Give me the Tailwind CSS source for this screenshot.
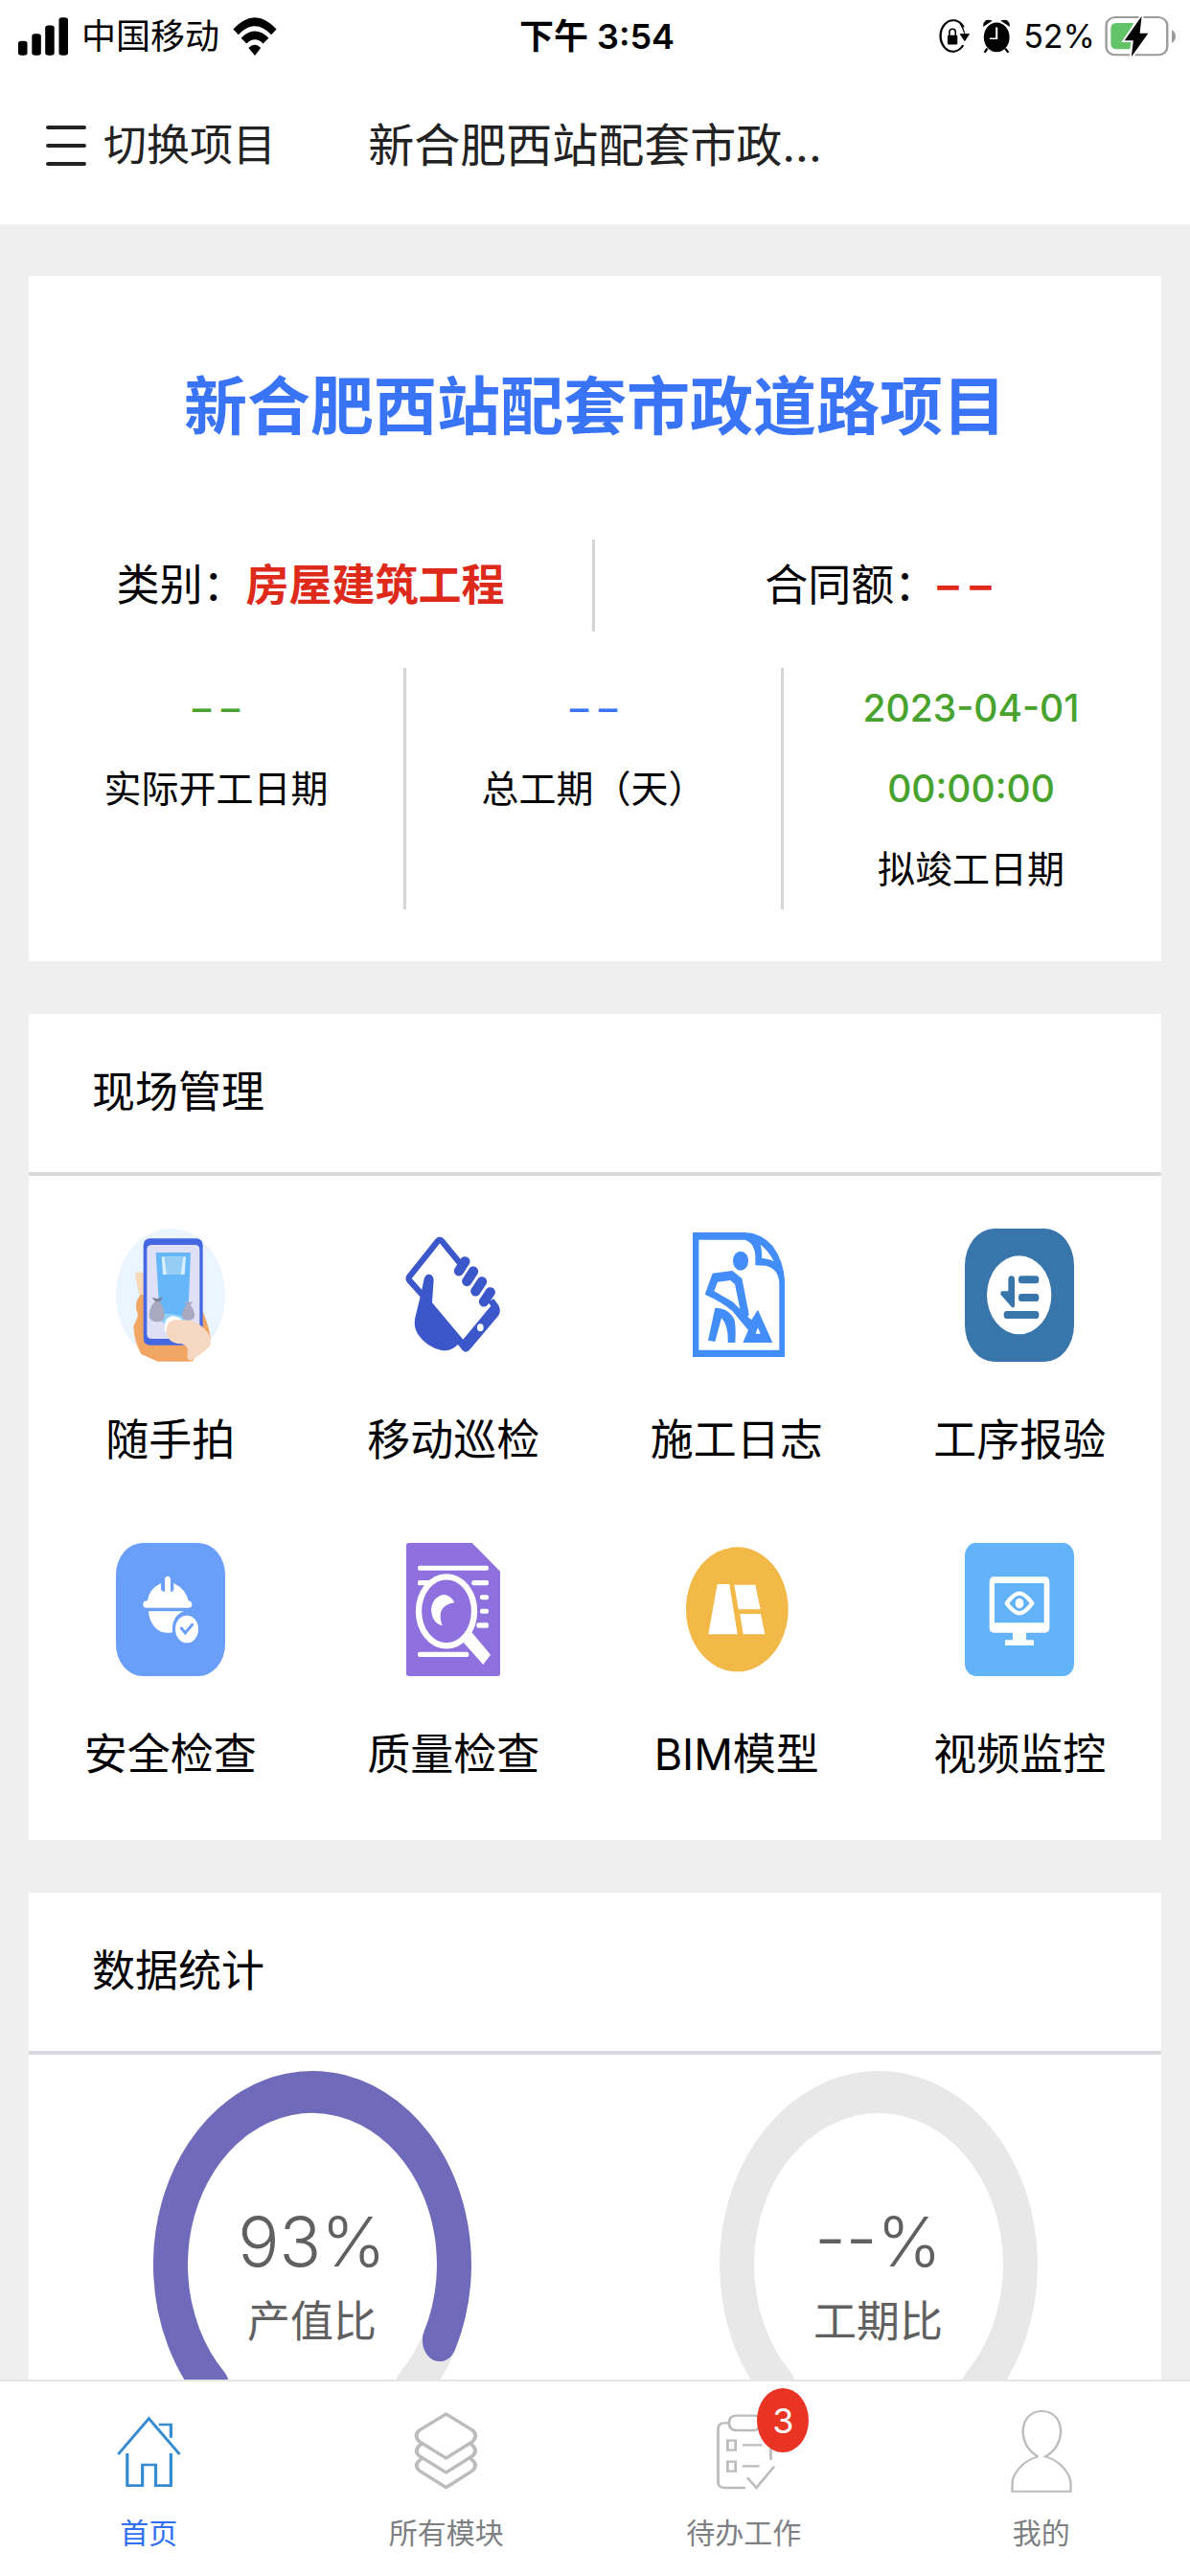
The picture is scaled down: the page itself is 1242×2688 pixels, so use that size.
<!DOCTYPE html>
<html lang="zh-CN">
<head>
<meta charset="utf-8">
<meta name="viewport" content="width=device-width, initial-scale=1">
<title>新合肥西站配套市政道路项目</title>
<script src="https://cdn.jsdelivr.net/npm/@tailwindcss/browser@4"></script>
</head>
<body class="flex h-screen flex-col bg-[#efefef] font-['Inter','Noto_Sans_CJK_SC',sans-serif] text-[45px] leading-[60px] text-black">

<header class="shrink-0 bg-white">
  <!-- Status bar -->
  <div class="grid h-[70px] grid-cols-[1fr_auto_1fr] items-center pt-[6px] pr-[15px] pl-[19px] text-[36px] leading-[48px]">
    <div class="flex items-center gap-[14px]">
      <svg class="h-[40px] w-[52px]" viewBox="49 50 131 119" preserveAspectRatio="none" aria-hidden="true">
        <rect x="49" y="124" width="24" height="44" rx="8"/><rect x="85" y="101" width="24" height="67" rx="8"/><rect x="120" y="75" width="24" height="93" rx="8"/><rect x="156" y="51" width="24" height="117" rx="8"/>
      </svg>
      <span>中国移动</span>
      <svg class="h-[40px] w-[46px]" viewBox="613 46 118 121" preserveAspectRatio="none" aria-hidden="true">
        <path d="M614 84Q672 10 730 84L716 101Q672 47 628 101ZM635 112Q672 68 709 112L694 129Q672 104 650 129ZM655 143Q672 123 688 143L672 167Z"/>
      </svg>
    </div>
    <div class="font-semibold">下午 3:54</div>
    <div class="flex items-center justify-end gap-[14px]">
      <svg class="h-[38px] w-[33px]" viewBox="904 60 83 112" preserveAspectRatio="none" aria-hidden="true">
        <path d="M971 88A33 48 0 1 0 970 143" fill="none" stroke="#000" stroke-width="6"/>
        <path d="M962 78Q973 92 974 110M962 109H986L974 130Z" fill="#000" stroke="#000" stroke-width="2"/>
        <rect x="929" y="112" width="26" height="29" rx="3"/><path d="M934 114V103Q934 93 942 93T950 103V114" fill="none" stroke="#000" stroke-width="4"/>
      </svg>
      <svg class="h-[36px] w-[28px]" viewBox="1027 57 69 110" preserveAspectRatio="none" aria-hidden="true">
        <ellipse cx="1062" cy="115" rx="33" ry="47"/><path d="M1029 78Q1030 56 1048 62ZM1094 78Q1093 56 1075 62Z" stroke="#000" stroke-width="3"/><path d="M1038 150L1031 163M1084 150L1092 163" stroke="#000" stroke-width="6"/><path d="M1062 83V119H1044" fill="none" stroke="#fff" stroke-width="5"/>
      </svg>
      <span class="text-[34px]">52%</span>
      <svg class="-ml-1 h-[44px] w-[74px]" viewBox="1342 44 186 132" preserveAspectRatio="none" aria-hidden="true">
        <rect x="1346" y="50" width="160" height="118" rx="24" fill="#fff" stroke="#9b9b9b" stroke-width="6"/>
        <path d="M1373 68H1418L1394 123H1413L1408 150H1373Q1358 150 1358 132V86Q1358 68 1373 68Z" fill="#62c466"/>
        <path d="M1518 89Q1528 97 1528 110T1518 131Z" fill="#9b9b9b"/>
        <path d="M1439 46L1394 123H1417L1412 174L1456 100H1434Z" stroke="#fff" stroke-width="10" paint-order="stroke"/>
      </svg>
    </div>
  </div>
  <!-- Navigation bar -->
  <div class="grid h-[164px] grid-cols-[1fr_auto_1fr] items-center px-[46px] text-[#222]">
    <button type="button" class="flex items-center gap-[17px] text-left">
      <svg class="h-[46px] w-[45px]" viewBox="0 0 45 46" fill="none" stroke="#222" stroke-width="4" stroke-linecap="round" aria-hidden="true"><path d="M4 4H42M4 23H42M4 42H42"/></svg>
      <span>切换项目</span>
    </button>
    <h1 class="text-[48px]">新合肥西站配套市政...</h1>
  </div>
</header>

<main class="min-h-0 flex-1 space-y-[55px] overflow-y-auto px-[30px] py-[54px] [scrollbar-width:none]">
  <!-- Project summary -->
  <section class="bg-white pt-[92px] pb-[54px] text-center">
    <h2 class="text-[66px] leading-[88px] font-bold text-[#3974f6]">新合肥西站配套市政道路项目</h2>
    <div class="mt-[95px] grid grid-cols-2 leading-[96px]">
      <p class="border-r-3 border-[#d5d5d9]">类别：<strong class="text-[#de2a1b]">房屋建筑工程</strong></p>
      <p>合同额：<strong class="font-semibold text-[#de2a1b]">– –</strong></p>
    </div>
    <dl class="mt-[38px] grid grid-cols-3 text-[39px] leading-[84px]">
      <div class="flex flex-col-reverse justify-end border-r-3 border-[#d5d5d9]"><dt>实际开工日期</dt><dd class="font-medium text-[#47a32e]">– –</dd></div>
      <div class="flex flex-col-reverse justify-end border-r-3 border-[#d5d5d9]"><dt>总工期（天）</dt><dd class="font-medium text-[#3974f6]">– –</dd></div>
      <div class="flex flex-col-reverse justify-end border-r-3 border-transparent px-[60px]"><dt>拟竣工日期</dt><dd class="font-medium text-[#47a32e]">2023-04-01 00:00:00</dd></div>
    </dl>
  </section>

  <!-- Site management -->
  <section class="bg-white">
    <h2 class="border-b-4 border-[#d9d9de] px-[66px] pt-[52px] pb-[53px]">现场管理</h2>
    <nav class="grid grid-cols-4 gap-y-[77px] pt-[55px] pb-[59px]">
      <a href="#photo" class="flex flex-col items-center gap-[52px]">
        <svg class="h-[139px] w-[114px]" viewBox="93 66 342 417" aria-hidden="true">
          <ellipse cx="264" cy="274" rx="171" ry="208" fill="#ebf5ff"/>
          <path d="M153 212Q155 200 168 202L182 206V280H170Q164 270 153 212Z" fill="#f8d7bb"/>
          <path d="M172 272Q152 290 157 320Q164 335 160 345L148 372Q150 420 172 459L224 482H332L370 420L390 412Q384 370 366 328L300 300Z" fill="#f2a664"/>
          <rect x="179" y="97" width="186" height="334" rx="20" fill="#4568e2"/>
          <rect x="190" y="117" width="165" height="294" rx="14" fill="#dfe0f7"/>
          <path d="M218 141H327L319 340H230Z" fill="#65b7fa"/>
          <path d="M236 154H312L308 210H240Z" fill="#d8f0fd"/><path d="M244 154H304L296 210H252Z" fill="#96cdf6"/>
          <path d="M228 344Q240 328 270 334L325 344L300 362H240Z" fill="#8fd3fb"/>
          <path d="M206 282L222 286L240 280L230 294Q246 314 245 344Q240 358 220 358T197 340Q198 308 216 294Z" fill="#a9a8c0"/><path d="M206 282L222 286L240 280L232 294L217 295Z" fill="#7e829e"/>
          <path d="M308 294L320 298L334 293L326 305Q340 320 339 342Q334 353 318 353T300 338Q302 318 314 305Z" fill="#a9a8c0"/>
          <path d="M246 390Q240 350 266 340Q284 338 300 352Z" fill="#fff"/>
          <path d="M252 400Q246 358 276 352Q320 350 344 360Q372 376 389 404V432Q360 462 324 480L317 470V440Q308 424 286 426Q258 420 252 400Z" fill="#f6d8c2"/>
        </svg>
        <span>随手拍</span>
      </a>
      <a href="#patrol" class="flex flex-col items-center gap-[52px]">
        <svg class="h-[139px] w-[114px]" viewBox="978 66 342 417" aria-hidden="true">
          <path d="M1060 282L1012 228Q1008 222 1012 216L1100 106Q1107 98 1114 106L1170 174" fill="none" stroke="#3c57c9" stroke-width="19"/>
          <g stroke="#3c57c9" stroke-width="31" stroke-linecap="round"><path d="M1186 169L1167 199M1212 200L1192 231M1239 232L1219 262M1265 265L1245 295"/></g>
          <path d="M1058 223Q1062 208 1074 209Q1086 211 1088 226L1083 298L1180 413L1267 308L1258 296L1276 286L1291 306Q1300 324 1291 338L1201 445Q1190 458 1178 447L1164 429Q1140 452 1112 447Q1064 436 1038 396Q1022 370 1032 336L1047 275Z" fill="#3c57c9"/>
          <ellipse cx="1234" cy="376" rx="10" ry="12" fill="#fff"/>
        </svg>
        <span>移动巡检</span>
      </a>
      <a href="#log" class="flex flex-col items-center gap-[52px]">
        <svg class="h-[139px] w-[114px]" viewBox="95 66 342 417" aria-hidden="true">
          <path fill-rule="evenodd" fill="#438df8" d="M128 78H292Q342 80 378 120Q412 166 416 228V468H128ZM147 101V446H399V238Q397 190 356 182L324 181V150Q320 108 290 101ZM340 116Q346 140 344 158Q370 162 382 168Q366 136 340 116Z"/>
          <ellipse cx="278" cy="167" rx="24" ry="30" fill="#438df8"/>
          <path fill-rule="evenodd" fill="#438df8" d="M190 206L252 198L282 222L304 334L300 342L312 352L332 320L378 423H285L302 384L252 324Q220 296 166 272ZM206 233L195 262L254 296L276 318L260 240L246 228ZM325 395H340L332 376Z"/>
          <path fill="#438df8" d="M198 314Q240 314 258 350Q264 370 261 423H238Q240 368 218 346L198 420L176 416Z"/>
        </svg>
        <span>施工日志</span>
      </a>
      <a href="#process" class="flex flex-col items-center gap-[52px]">
        <svg class="h-[139px] w-[114px]" viewBox="981 66 342 417" aria-hidden="true">
          <rect x="981" y="66" width="342" height="417" rx="92" ry="116" fill="#3775ab"/>
          <ellipse cx="1151" cy="274" rx="101" ry="123" fill="#fff"/>
          <g fill="#3775ab"><rect x="1149" y="214" width="64" height="24" rx="10"/><rect x="1149" y="270" width="64" height="24" rx="10"/><rect x="1103" y="324" width="110" height="24" rx="10"/><path d="M1117 224Q1118 214 1127 214T1137 224V308Q1132 318 1126 310L1093 272Q1092 262 1100 262H1117Z"/></g>
        </svg>
        <span>工序报验</span>
      </a>
      <a href="#safety" class="flex flex-col items-center gap-[52px]">
        <svg class="h-[139px] w-[114px]" viewBox="93 61 342 417" aria-hidden="true">
          <rect x="93" y="61" width="342" height="417" rx="84" ry="100" fill="#6a9ff9"/>
          <path d="M192 242Q196 206 234 187V206Q236 214 246 214V174Q248 165 255 165T264 174V214Q274 214 274 206V187Q312 206 320 242Q331 244 331 254T322 264H188Q178 264 178 253T192 242Z" fill="#fff"/>
          <path d="M195 275H306Q266 290 270 341Q236 348 214 324Q196 302 195 275Z" fill="#fff"/>
          <ellipse cx="315" cy="331" rx="36" ry="43" fill="#fff"/><path d="M298 328L310 343L332 317" fill="none" stroke="#6a9ff9" stroke-width="9" stroke-linecap="round"/>
        </svg>
        <span>安全检查</span>
      </a>
      <a href="#quality" class="flex flex-col items-center gap-[52px]">
        <svg class="h-[139px] w-[114px]" viewBox="978 61 342 417" aria-hidden="true">
          <path d="M1010 61H1208L1296 150V470Q1296 478 1288 478H1010Q1002 478 1002 470V69Q1002 61 1010 61Z" fill="#8e70df"/>
          <g fill="#fff"><rect x="1038" y="132" width="222" height="15" rx="6"/><rect x="1038" y="178" width="40" height="16" rx="5"/><rect x="1207" y="178" width="53" height="16" rx="6"/><rect x="1233" y="224" width="27" height="15" rx="6"/><rect x="1233" y="267" width="27" height="15" rx="6"/><rect x="1222" y="311" width="38" height="16" rx="6"/><rect x="1038" y="402" width="160" height="16" rx="6"/></g>
          <ellipse cx="1128" cy="275" rx="87" ry="108" fill="#8e70df" stroke="#fff" stroke-width="19"/>
          <path d="M1182 374L1207 341L1266 411L1243 442Z" fill="#fff"/>
          <path d="M1153 248Q1142 225 1120 223Q1086 228 1080 268Q1082 312 1115 320Q1092 258 1153 248Z" fill="#fff"/>
        </svg>
        <span>质量检查</span>
      </a>
      <a href="#bim" class="flex flex-col items-center gap-[52px]">
        <svg class="h-[139px] w-[114px]" viewBox="95 61 342 417" aria-hidden="true">
          <ellipse cx="267" cy="269" rx="160" ry="195" fill="#f2b948"/>
          <path d="M205 190H243L268 347H177ZM258 192H324L340 269H271ZM276 283H341L354 347H286Z" fill="#fff"/>
        </svg>
        <span>BIM模型</span>
      </a>
      <a href="#video" class="flex flex-col items-center gap-[52px]">
        <svg class="h-[139px] w-[114px]" viewBox="981 61 342 417" aria-hidden="true">
          <rect x="981" y="61" width="342" height="417" rx="34" ry="40" fill="#62b3f8"/>
          <path fill-rule="evenodd" fill="#fff" d="M1072 167H1232Q1246 167 1246 184V326Q1246 342 1232 342H1173V365H1197V382H1107V365H1131V342H1072Q1058 342 1058 326V184Q1058 167 1072 167ZM1074 187V311H1229V187Z"/>
          <path d="M1112 250Q1135 219 1152 219T1192 250Q1169 281 1152 281T1112 250Z" fill="none" stroke="#fff" stroke-width="13" stroke-linejoin="round"/><ellipse cx="1152" cy="250" rx="13" ry="16" fill="#fff"/>
        </svg>
        <span>视频监控</span>
      </a>
    </nav>
  </section>

  <!-- Statistics -->
  <section class="bg-white">
    <h2 class="border-b-4 border-[#d9d9de] px-[66px] pt-[52px] pb-[53px]">数据统计</h2>
    <div class="grid grid-cols-2 justify-items-center pt-[17px] pb-10 text-[#606060]">
      <div class="grid place-items-center">
        <svg class="col-start-1 row-start-1 h-[404px] w-[332px]" viewBox="-166 -166 332 332" preserveAspectRatio="none" fill="none" stroke-width="36" stroke-linecap="round" aria-hidden="true">
          <path d="M-104.7 104.7A148 148 0 1 1 104.7 104.7" stroke="#e8e8e8"/>
          <path d="M-104.7 104.7A148 148 0 1 1 132.9 65.1" stroke="#6f6bba"/>
        </svg>
        <p class="col-start-1 row-start-1 flex flex-col pt-6 text-center leading-[72px]"><span class="text-[72px] leading-[96px] font-light">93%</span><span>产值比</span></p>
      </div>
      <div class="grid place-items-center">
        <svg class="col-start-1 row-start-1 h-[404px] w-[332px]" viewBox="-166 -166 332 332" preserveAspectRatio="none" fill="none" stroke-width="36" stroke-linecap="round" aria-hidden="true">
          <path d="M-104.7 104.7A148 148 0 1 1 104.7 104.7" stroke="#e8e8e8"/>
        </svg>
        <p class="col-start-1 row-start-1 flex flex-col pt-6 text-center leading-[72px]"><span class="text-[72px] leading-[96px] font-light">--%</span><span>工期比</span></p>
      </div>
    </div>
  </section>
</main>

<!-- Tab bar -->
<nav class="grid shrink-0 grid-cols-4 border-t-2 border-[#e5e5e5] bg-white pt-[27px] pb-[25px] text-[30px] leading-[40px] text-[#7d8083]">
  <a href="#home" aria-current="page" class="flex flex-col items-center gap-[21px] text-[#2f6ff3]">
    <svg class="h-[90px] w-[80px]" viewBox="290 126 202 270" preserveAspectRatio="none" fill="none" stroke="#368bd1" stroke-width="8" aria-hidden="true">
      <path d="M311 273L392 161L473 273M418 180H450V221M335 270V371H375V306H410V371H450V270"/>
    </svg>
    <span>首页</span>
  </a>
  <a href="#modules" class="flex flex-col items-center gap-[21px]">
    <svg class="h-[90px] w-[80px]" viewBox="1075 126 202 270" preserveAspectRatio="none" fill="none" stroke="#bcbcbc" stroke-width="10" stroke-linejoin="round" aria-hidden="true">
      <path d="M1175 147L1245 198Q1260 214 1245 233L1175 285L1104 233Q1089 214 1104 198ZM1110 240Q1088 260 1104 278L1175 330L1245 278Q1261 260 1240 240M1110 287Q1088 305 1104 324L1175 377L1245 324Q1261 305 1240 287"/>
    </svg>
    <span>所有模块</span>
  </a>
  <a href="#todo" class="flex flex-col items-center gap-[21px]">
    <span class="relative">
      <svg class="h-[90px] w-[80px]" viewBox="290 126 202 270" preserveAspectRatio="none" fill="none" stroke="#bcbcbc" stroke-width="7" aria-hidden="true">
        <path d="M352 175H340Q324 175 324 195V358Q324 378 340 378H396M440 175Q463 175 463 195V290M372 152H420Q434 152 434 175T420 198H372Q353 198 353 175T372 152ZM349 230H370V260H349ZM349 296H370V326H349ZM388 244H440M388 310H433M401 346L425 378L472 311"/>
      </svg>
      <span class="absolute -top-5 left-[54px] grid h-[67px] w-[54px] place-items-center rounded-[50%] bg-[#e93323] text-[36px] text-white">3</span>
    </span>
    <span>待办工作</span>
  </a>
  <a href="#me" class="flex flex-col items-center gap-[21px]">
    <svg class="h-[90px] w-[80px]" viewBox="1075 126 202 270" preserveAspectRatio="none" fill="none" stroke="#bcbcbc" stroke-width="6" aria-hidden="true">
      <path d="M1167 280C1110 245 1115 138 1177 138S1244 245 1186 280C1225 292 1253 335 1253 365V389H1099V365C1099 335 1127 292 1167 280"/>
    </svg>
    <span>我的</span>
  </a>
</nav>
</body>
</html>
